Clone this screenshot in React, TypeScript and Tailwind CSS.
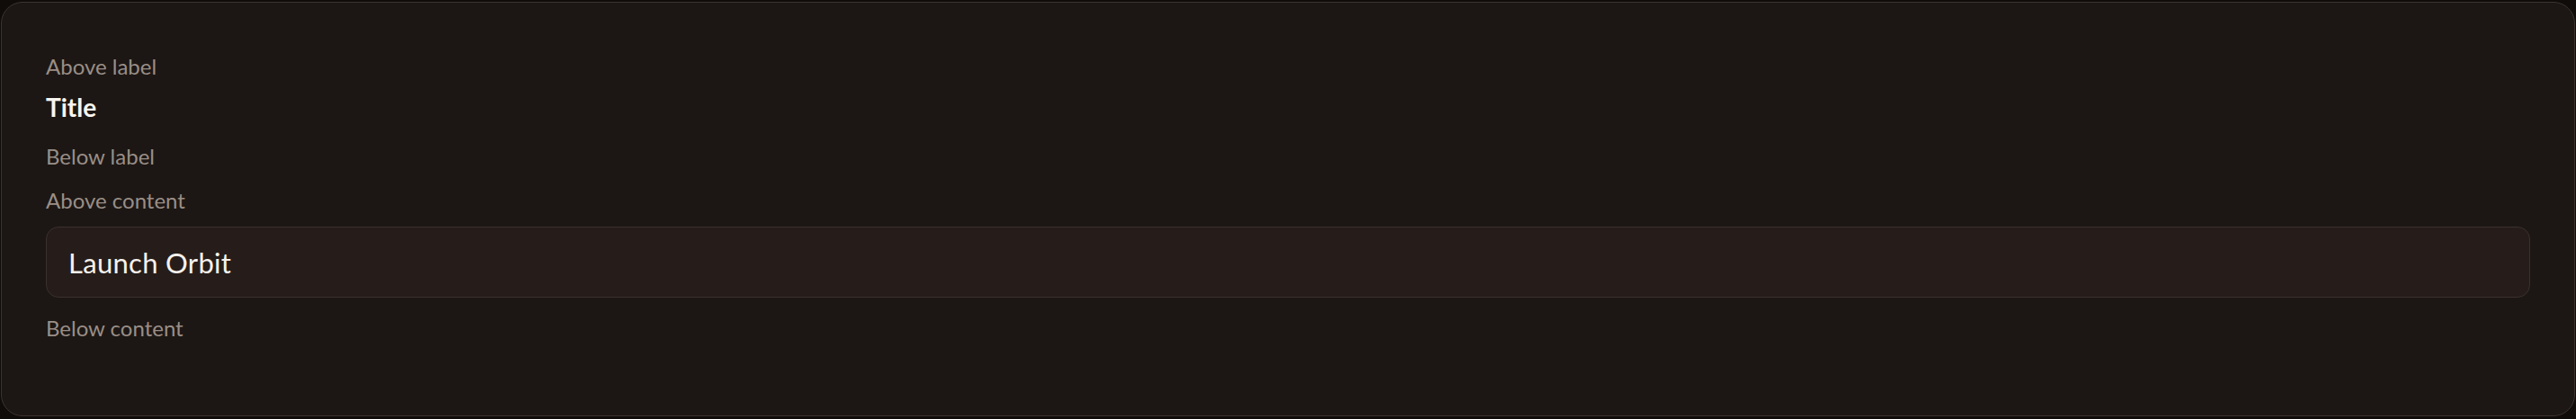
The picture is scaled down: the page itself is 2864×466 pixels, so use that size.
export default function App() {
  return (
    <div className="min-h-[466px] bg-[#100c0a] px-[1px] pt-[2px] pb-[3px] font-['Lato','Inter',sans-serif]">
      <div className="h-[461px] rounded-[24px] border border-[#3b3330] bg-[#1c1714] px-[49px] pt-[55px]">
        <div className="flex flex-col">
          <p className="text-[24px] leading-[32px] text-[#9a8e87]">Above label</p>
          <h2 className="mt-[11px] text-[28px] font-bold leading-[36px] text-[#f8f4f0]">
            Title
          </h2>
          <p className="mt-[21px] text-[24px] leading-[32px] text-[#9a8e87]">Below label</p>
          <p className="mt-[17px] text-[24px] leading-[32px] text-[#9a8e87]">Above content</p>
          <div className="mt-[13px] flex h-[79px] items-center rounded-[14px] border border-[#3a312e] bg-[#261d1a] px-[24px]">
            <span className="text-[31px] tracking-[0.3px] leading-[40px] text-[#f6f1ed]">Launch Orbit</span>
          </div>
          <p className="mt-[18px] text-[24px] leading-[32px] text-[#9a8e87]">Below content</p>
        </div>
      </div>
    </div>
  );
}
